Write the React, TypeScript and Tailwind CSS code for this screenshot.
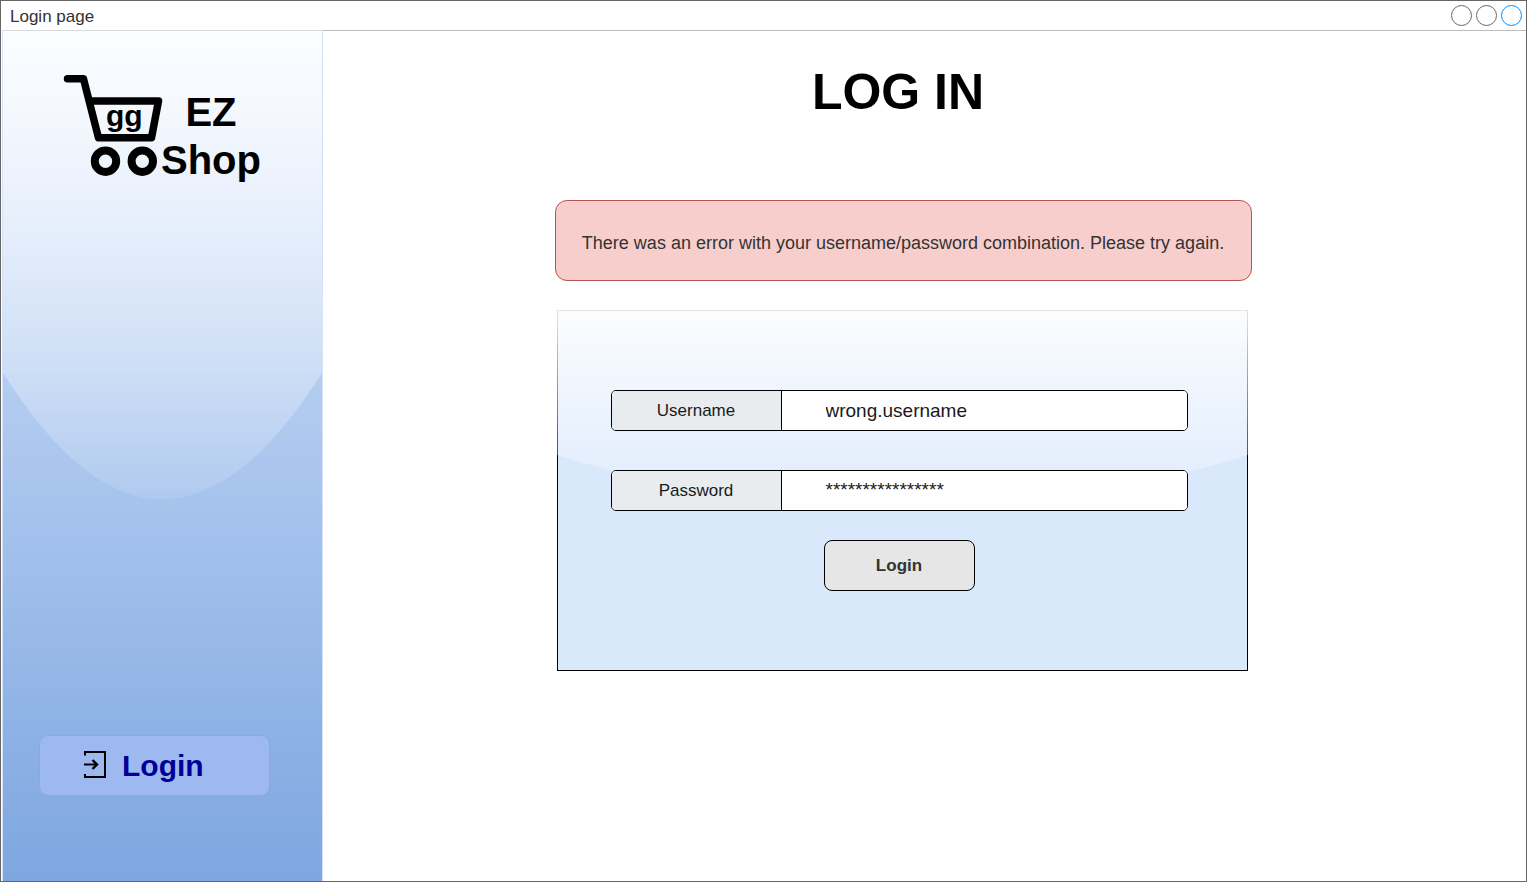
import { useId } from "react";
import type { ReactNode } from "react";

function Glass() {
  const id = useId();
  return (
    <svg
      className="pointer-events-none absolute inset-0 h-full w-full"
      viewBox="0 0 100 100"
      preserveAspectRatio="none"
      aria-hidden="true"
    >
      <defs>
        <linearGradient id={id} x1="0" y1="0" x2="0" y2="1">
          <stop offset="0" stopColor="#fff" stopOpacity="0.9" />
          <stop offset="1" stopColor="#fff" stopOpacity="0.1" />
        </linearGradient>
      </defs>
      <path d="M0 0 L0 40.2 Q50 70 100 40.2 L100 0 Z" fill={`url(#${id})`} />
    </svg>
  );
}

function Cart() {
  return (
    <svg className="h-[104px] w-[100px]" viewBox="0 0 100 104" fill="none" stroke="#000" aria-hidden="true">
      <path
        d="M4.5 5.8 H20.5 L35.5 64.8 H88.5 L95.5 28 H28"
        strokeWidth="7.5"
        strokeLinecap="round"
        strokeLinejoin="round"
      />
      <circle cx="42.5" cy="88.2" r="10.7" strokeWidth="8" />
      <circle cx="79.3" cy="88.2" r="10.7" strokeWidth="8" />
    </svg>
  );
}

function LoginIcon() {
  return (
    <svg className="-mt-1 h-7 w-6" viewBox="0 0 24 28" fill="none" stroke="#000" strokeWidth="2" aria-hidden="true">
      <path d="M2 5.5 V2 H22 V27 H2 V24" />
      <path d="M1 14.5 H14" />
      <path d="M9.5 10 L14 14.5 L9.5 19" strokeWidth="2.4" />
    </svg>
  );
}

function Field({ label, id, children }: { label: string; id: string; children: ReactNode }) {
  return (
    <div className="flex h-[41px] overflow-hidden rounded-[5px] border border-black bg-white">
      <label
        htmlFor={id}
        className="flex w-[170px] shrink-0 items-center justify-center border-r border-black bg-[#e8ecef] text-[17px] text-[#1a1a1a]"
      >
        {label}
      </label>
      {children}
    </div>
  );
}

export default function App() {
  return (
    <div className="min-h-screen bg-white pr-px pb-px font-['Liberation_Sans',Arial,sans-serif]">
      <div className="flex min-h-[calc(100vh-1px)] flex-col border border-[#666]">
        <header className="flex h-[29px] shrink-0 items-center justify-between pr-1 pl-[9px]">
          <span className="pt-0.5 text-[17px] text-[#333]">Login page</span>
          <div className="flex gap-1">
            <button aria-label="Minimize" className="size-[21px] rounded-full border border-[#666]" />
            <button aria-label="Maximize" className="size-[21px] rounded-full border border-[#666]" />
            <button aria-label="Close" className="size-[21px] rounded-full border border-[#008cff]" />
          </div>
        </header>

        <div className="flex grow">
          <aside className="ml-px flex w-[321px] shrink-0 flex-col border-x border-t border-x-[#d6e2f7] border-t-[#d9d9d9]">
            <div className="relative flex grow flex-col justify-between bg-linear-to-b from-[#dae8fc] to-[#7ea6e0]">
              <Glass />
              <div className="relative flex pt-[42px] pl-[60px]">
                <div className="relative">
                  <Cart />
                  <span className="absolute top-[25px] left-[43px] text-[30px] leading-9 font-bold">gg</span>
                </div>
                <div className="-ml-1 w-[104px] pt-[15px] text-center text-[40px] leading-12 font-bold">
                  EZ Shop
                </div>
              </div>
              <nav className="relative pb-[85px] pl-9">
                <a
                  href="#login"
                  className="flex h-[61px] w-[231px] items-center gap-[15px] rounded-[9px] border border-[#8aa9de] bg-[#9db9f0] pl-[43px] text-[30px] font-bold text-[#000099]"
                >
                  <LoginIcon />
                  Login
                </a>
              </nav>
            </div>
          </aside>

          <main className="flex grow flex-col items-center border-t border-[#bdbdbd] pr-[43px]">
            <h1 className="pt-8 pr-2.5 text-[50px] leading-[58px] font-bold">LOG IN</h1>
            <p
              role="alert"
              className="mt-[79px] flex h-[81px] w-[697px] items-center justify-center rounded-xl border border-[#b85450] bg-[#f8cecc] pt-1.5 text-[18px] text-[#333]"
            >
              There was an error with your username/password combination. Please try again.
            </p>
            <form
              className="relative mt-[29px] mr-0.5 w-[691px] bg-[#dae8fc]"
              onSubmit={(e) => e.preventDefault()}
            >
              <div className="flex flex-col border border-black pt-[79px] pr-[59px] pb-[79px] pl-[53px]">
                <Glass />
                <div className="relative flex flex-col gap-[39px]">
                  <Field label="Username" id="username">
                    <input
                      id="username"
                      type="text"
                      defaultValue="wrong.username"
                      className="min-w-0 grow bg-white pt-0.5 pl-11 text-[19px] text-[#1a1a1a] outline-none"
                    />
                  </Field>
                  <Field label="Password" id="password">
                    <input
                      id="password"
                      type="text"
                      autoComplete="off"
                      defaultValue="****************"
                      className="min-w-0 grow bg-white pl-11 text-[19px] text-[#1a1a1a] outline-none"
                    />
                  </Field>
                </div>
                <button
                  type="submit"
                  className="relative mt-[29px] h-[51px] w-[151px] self-center rounded-lg border border-black bg-[#e6e6e6] text-[17px] font-bold text-[#333]"
                >
                  Login
                </button>
              </div>
            </form>
          </main>
        </div>
      </div>
    </div>
  );
}
